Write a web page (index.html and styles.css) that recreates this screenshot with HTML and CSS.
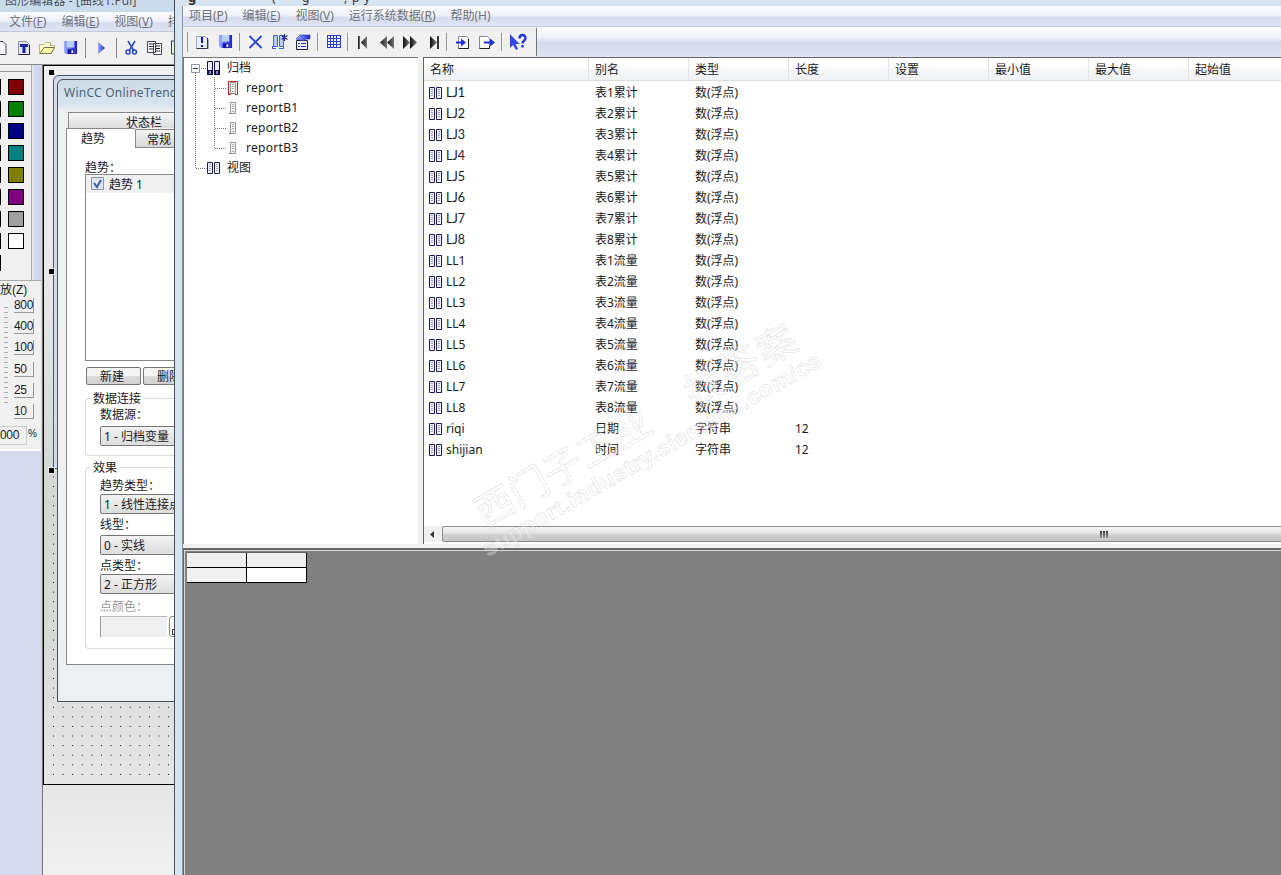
FILE: index.html
```html
<!DOCTYPE html>
<html lang="zh">
<head>
<meta charset="utf-8">
<title>用户归档</title>
<link rel="stylesheet" href="styles.css">
</head>
<body>
<svg width="0" height="0" class="defs">
  <symbol id="book" viewBox="0 0 13 12"><path d="M.5.5h5v11h-5zM7.500.5h5v11h-5z" fill="#f4f4ff" stroke="#1c1c50"/><path d="M2 2.500h2M2 4.500h2M2 6.500h2M2 8.500h2M9 2.500h2M9 4.500h2M9 6.500h2M9 8.500h2" stroke="#9c9cc8"/></symbol>
  <symbol id="doc" viewBox="0 0 10 14"><path d="M2.500 1.500h5v11h-5z" fill="#f4f4f4" stroke="#999"/><path d="M1 12.500h6" stroke="#888"/><path d="M4 3.500h2M4 5.500h2M4 7.500h2M4 10.500h2" stroke="#aaa"/></symbol>
  <linearGradient id="blue"><stop offset="0" stop-color="#9cb0ff"/><stop offset="1" stop-color="#1d20d0"/></linearGradient>
  <linearGradient id="grey"><stop offset="0" stop-color="#111"/><stop offset="1" stop-color="#777"/></linearGradient>
  <symbol id="save" viewBox="0 0 16 16"><path d="M1 1h14v14H3l-2-2z" fill="url(#blue)"/><path d="M4 1h8v7H4z" fill="#bcd0f5"/><path d="M5 10h7v5H5z" fill="#1414a0"/><path d="M9 11h2v3H9z" fill="#fff"/></symbol>
</svg>
<div class="desktop">
  <section class="editor">
    <div class="title ed-title">图形编辑器 - [曲线1.Pdl]</div>
    <div class="menu ed-menu"><span>文件(<u>F</u>)</span><span>编辑(<u>E</u>)</span><span>视图(<u>V</u>)</span><span>排列</span></div>
    <div class="ed-tools">
      <svg width="174" height="30" viewBox="0 34 174 30">
        <path d="M-4 41.500h7l3 3v10h-10" fill="#f4f4ff" stroke="#445"/>
        <path d="M18.500 41.500h8l3 3v10h-11z" fill="#dfe6fb" stroke="#8890b8"/><path d="M29.500 45v9.500h-11" fill="none" stroke="#223"/><path d="M20 44h8v3h-2.500v6h-3v-6H20z" fill="#1c24a8"/>
        <path d="M39.500 53.500v-9h4l2-2h5v3h4l-3 8z" fill="#fffbd0" stroke="#b9b48a"/><path d="M40 53.500l4-6h10.500l-3.500 6z" fill="#fff6a8" stroke="#777540"/>
        <use href="#save" x="63" y="40" width="15" height="15"/>
        <path d="M85.500 38v20M116.500 38v20" stroke="#888"/><path d="M98 42v12l7-6z" fill="url(#blue)"/>
        <path d="M128 41l6 10M135 41l-6 10" stroke="#2945c8" stroke-width="1.500"/><circle cx="128" cy="52" r="2" fill="none" stroke="#2945c8" stroke-width="1.500"/><circle cx="134.500" cy="52" r="2" fill="none" stroke="#2945c8" stroke-width="1.500"/>
        <path d="M147.500 41.500h8v11h-8zM153.500 43.500h8v11h-8z" fill="#fff" stroke="#445"/><path d="M149 44h4M149 46.500h4M149 49h4M155 46h5M155 48.500h5M155 51h5" stroke="#223"/><path d="M171.500 41v13h3M171 41h3" fill="none" stroke="#223a90"/>
      </svg>
    </div>
    <div class="ed-body">
      <aside class="side">
        <div class="palette">
          <div class="sliver"><i></i><i></i><i></i><i></i><i></i><i></i><i></i><i></i><i></i></div>
          <div class="colors"><b class="c1"></b><b class="c2"></b><b class="c3"></b><b class="c4"></b><b class="c5"></b><b class="c6"></b><b class="c7"></b><b class="c8"></b></div>
          <div class="grip"></div>
        </div>
        <div class="zoom">
          <div class="zoom-head">放(Z)</div>
          <div class="zoom-main"><div class="ticks"></div><div class="levels"><span>800</span><span>400</span><span>100</span><span>50</span><span>25</span><span>10</span></div></div>
          <div class="zoom-foot"><span>000</span><em>%</em></div>
        </div>
      </aside>
      <div class="canvas">
        <div class="sheet"><div class="dots"></div></div>
        <i class="handle h1"></i><i class="handle h2"></i><i class="handle h3"></i>
        <div class="halo"></div>
        <div class="dialog">
          <div class="dlg-title">WinCC OnlineTrendControl</div>
          <div class="tab-back">状态栏</div>
          <div class="tabs"><span class="tab on">趋势</span><span class="tab">常规</span></div>
          <div class="page">
            <label class="lb">趋势：</label>
            <div class="listbox"><div class="item"><svg width="13" height="13"><path d="M.5.5h12v12H.5z" fill="#dce6f4" stroke="#8a96a8"/><path d="M3 6l3 4 4-7" fill="none" stroke="#3d5c96" stroke-width="2"/></svg><span>趋势 1</span></div></div>
            <div class="btns"><span class="btn">新建</span><span class="btn">删除</span></div>
            <div class="group g1"><span class="cap">数据连接</span><label>数据源：</label><div class="combo">1 - 归档变量</div></div>
            <div class="group g2"><span class="cap">效果</span><label>趋势类型：</label><div class="combo">1 - 线性连接点</div><label class="l2">线型：</label><div class="combo">0 - 实线</div><label class="l3">点类型：</label><div class="combo">2 - 正方形</div><label class="l4">点颜色：</label><div class="color-row"><span></span><b></b></div></div>
          </div>
        </div>
      </div>
    </div>
  </section>

  <section class="archive">
    <div class="ar-title"><b>g</b><span>(</span><span>g</span><span>,</span><span>p</span><span>y</span></div>
    <div class="menu ar-menu"><span>项目(<u>P</u>)</span><span>编辑(<u>E</u>)</span><span>视图(<u>V</u>)</span><span>运行系统数据(<u>R</u>)</span><span>帮助(H)</span></div>
    <div class="ar-tools">
      <svg width="354" height="29" viewBox="183 27 354 29">
        <path d="M187.500 32v20M239.500 33v18M317.500 33v18M347.500 33v18M446.500 33v18M501.500 33v18" stroke="#999"/><path d="M536.500 28v28" stroke="#777"/>
        <path d="M196.500 36.500h9l3 3v9h-12z" fill="#e8edff" stroke="#a0a8c8"/><path d="M207.500 38v10.500h-11" fill="none" stroke="#334"/><path d="M202 37v6M202 45v2" stroke="#1414c0" stroke-width="2"/>
        <use href="#save" x="218" y="34" width="15" height="15"/>
        <path d="M249.500 36l12 12M261.500 36l-12 12" stroke="#2a3ed8" stroke-width="1.800"/>
        <path d="M273.500 35.500h4v11h-4zM279.500 35.500h4v11h-4z" fill="#b9c8ff" stroke="#4a60d8"/><path d="M272 48.500h4M279 48.500h5M272.500 46v3M283.500 46v3" stroke="#4a60d8"/><path d="M284.500 34v7M281.500 35.500l6 4M287.500 35.500l-6 4" stroke="#222a90" stroke-width="1.200"/>
        <path d="M296.500 40.500h11v9h-11z" fill="#eef" stroke="#224"/><path d="M298 43.500h2M301 43.500h5M298 46.500h2M301 46.500h5" stroke="#2a38b8"/><path d="M296 39l4-4h10v4h-4l-2 2z" fill="url(#blue)" stroke="#2038a0" stroke-width=".6"/>
        <path d="M327 35h14v13h-14z" fill="#2c3fc4"/><path d="M328 36h2v2h-2zm3 0h2v2h-2zm3 0h2v2h-2zm3 0h3v2h-3zM328 39h2v2h-2zm3 0h2v2h-2zm3 0h2v2h-2zm3 0h3v2h-3zM328 42h2v2h-2zm3 0h2v2h-2zm3 0h2v2h-2zm3 0h3v2h-3zM328 45h2v2h-2zm3 0h2v2h-2zm3 0h2v2h-2zm3 0h3v2h-3z" fill="#edf0ff"/>
        <g fill="url(#grey)"><path d="M358 36h2v13h-2z"/><path d="M367 36v13l-6-6.500z"/><path d="M387 36v13l-7-6.500z"/><path d="M394 36v13l-7-6.500z"/><path d="M403 36v13l7-6.500z"/><path d="M410 36v13l7-6.500z"/><path d="M430 36v13l7-6.500z"/><path d="M437 36h2v13h-2z" fill="#333"/></g>
        <path d="M458.500 36.500h8l2 2v10h-10z" fill="#fff" stroke="#889"/><path d="M468.500 39v9.500h-10" stroke="#222" fill="none"/><path d="M456 41.500h5v-3l5 4-5 4v-3h-5z" fill="#2030d8"/>
        <path d="M479.500 36.500h8l2 2v10h-10z" fill="#fff" stroke="#889"/><path d="M489.500 46v2.500h-10" stroke="#222" fill="none"/><path d="M484 41.500h6v-3l5 4-5 4v-3h-6z" fill="#2030d8"/>
        <path d="M510 34v14l3-3 3 5 2-1-2.500-5h4z" fill="#3348e0"/><path d="M519.500 38.500c0-4.500 6-4.500 6-.5 0 3-3 2.500-3 5.500M522.500 45v2.500" fill="none" stroke="#2233d0" stroke-width="2.400"/>
      </svg>
    </div>
    <div class="panes">
      <div class="tree">
        <svg class="wires" width="60" height="130" viewBox="184 58 60 130"><path d="M195.500 73v95.500h11M201 68.500h5M214.500 77v71.500M215 88.500h11M215 108.500h11M215 128.500h11M215 148.500h11" fill="none" stroke="#777" stroke-dasharray="1 1"/><path d="M191.500 64.500h8v8h-8z" fill="#fff" stroke="#8c94a8"/><path d="M193 68.500h5" stroke="#335"/></svg>
        <div class="node root"><svg width="13" height="15" viewBox="0 0 13 15"><path d="M.5.500h5v13h-5zM7.500.500h5v13h-5z" fill="#eef" stroke="#10104c"/><path d="M0 9h6v5H0zM7 9h6v5H7z" fill="#10104c"/><path d="M3 10v3M10 10v3" stroke="#fff"/></svg>归档</div>
        <div class="node leaf"><svg width="10" height="14" viewBox="0 0 10 14"><use href="#doc"/><path d="M.5 13.500V.500h9v13M0 13.500h3M7 13.500h3" fill="none" stroke="#c0281c"/></svg>report</div>
        <div class="node leaf"><svg width="10" height="14"><use href="#doc"/></svg>reportB1</div>
        <div class="node leaf"><svg width="10" height="14"><use href="#doc"/></svg>reportB2</div>
        <div class="node leaf"><svg width="10" height="14"><use href="#doc"/></svg>reportB3</div>
        <div class="node root"><svg width="13" height="12"><use href="#book"/></svg>视图</div>
      </div>
      <div class="list">
        <div class="row head"><span>名称</span><span>别名</span><span>类型</span><span>长度</span><span>设置</span><span>最小值</span><span>最大值</span><span>起始值</span></div>
        <div class="rows" id="rows"></div>
        <div class="scroll"><svg width="18" height="16"><path d="M10 5v7L6 8.500z" fill="#333"/></svg><div class="thumb"><i></i><i></i><i></i></div></div>
      </div>
    </div>
    <div class="data"><div class="cells"><i></i><i></i><i></i><i class="w"></i></div></div>
  </section>
  <svg class="mark" width="1281" height="875">
    <g transform="translate(485 528) rotate(-29.800)"><text class="m1" x="0" y="0" textLength="196">西门子工业</text><text class="m1" x="241" y="0" textLength="122">找答案</text></g>
    <g transform="translate(488 557) rotate(-29.800)"><text class="m2" textLength="386">support.industry.siemens.com/cs</text></g>
  </svg>
</div>
<script src="rows.js"></script>
</body>
</html>
```
FILE: styles.css
```css
* { box-sizing: border-box; }
body { margin: 0; overflow: hidden; font: 12px/16px "Noto Sans", "Noto Sans CJK SC", sans-serif; color: #1a1a1a; }
.defs { position: absolute; }
i, b, em { display: block; font-style: normal; }
.desktop { position: relative; width: 1281px; height: 875px; display: flex; overflow: hidden; }
.desktop span, .desktop label, .node { white-space: nowrap; }

/* graphics editor window */
.editor { width: 174px; height: 875px; overflow: hidden; display: flex; flex-direction: column; background: #f0f0f0; flex: none; }
.ed-title { display: flex; align-items: flex-end; height: 12px; line-height: 16px; padding: 0 0 3px 5px; background: #cadceb; color: #4a535c; white-space: nowrap; overflow: hidden; letter-spacing: .1px; }
.menu { display: flex; color: #6f7278; background: linear-gradient(#fafbfe 0%, #f0f2fa 45%, #d6dcef 60%, #dfe4f3 100%); }
.ed-menu { height: 20px; padding: 2px 0 0 9px; gap: 15px; border-bottom: 1px solid #c3c9da; }
.ed-tools { height: 32px; padding-top: 2px; }
.ed-tools svg { display: block; }
.ed-body { flex: 1; display: flex; border-top: 1px solid #888; min-height: 0; }
.side { width: 42px; background: #d4d9ee; border-right: 1px solid #d5d5d5; flex: none; }
.palette { height: 215px; width: 42px; display: flex; }
.sliver { width: 8px; background: #f0f0f0; padding-top: 14px; }
.sliver i { width: 1px; height: 16px; background: #000; margin-bottom: 6px; }
.colors { width: 24px; background: #f0f0f0; padding-top: 14px; border-right: 1px solid #aaa; }
.colors b { width: 16px; height: 16px; border: 1px solid #000; margin-bottom: 6px; }
.sliver, .colors { background: linear-gradient(#f0f0f0 0 6px, #999 6px 7px, #f0f0f0 7px); }
.colors .c1 { background: #800000; } .colors .c2 { background: #008000; } .colors .c3 { background: #000080; } .colors .c4 { background: #008080; }
.colors .c5 { background: #808000; } .colors .c6 { background: #800080; } .colors .c7 { background: #a0a0a0; } .colors .c8 { background: #fff; }
.grip { width: 9px; background: linear-gradient(90deg, #f0f0f0, #d0d6ee 30%); }
.zoom { height: 171px; background: #f0f0f0; border-top: 1px solid #aaa; border-bottom: 2px solid #fff; font-family: "Liberation Sans", "Noto Sans CJK SC", sans-serif; }
.zoom-head { height: 17px; line-height: 18px; }
.zoom-main { display: flex; height: 130px; }
.ticks { width: 4px; height: 100px; margin: 9px 6px 0 4px; background: repeating-linear-gradient(#aaa 0 1px, transparent 1px 5px); }
.levels span { display: block; width: 20px; height: 15px; line-height: 14px; margin-bottom: 6.200px; border-right: 1px solid #999; border-bottom: 1px solid #999; letter-spacing: -.3px; }
.zoom-foot { display: flex; line-height: 16px; margin-top: -2px; }
.zoom-foot span { width: 27px; height: 19px; border: 1px solid #ccc; border-left: 0; letter-spacing: -.3px; }
.zoom-foot em { font-size: 10px; margin-left: 1px; line-height: 15px; }
.canvas { position: relative; width: 132px; background: linear-gradient(#f0f0f0 0, #e8e9e8 200px, #d4d7d4 430px, #d8dad8 570px, #e4e4e4 690px, #e7e7e7 725px, #f0f0f0 100%); border-left: 1px solid #777; overflow: hidden; }
.sheet { height: 720px; border: 1px solid #000; border-width: 1px 0 1px 1px; display: flex; flex-direction: column; justify-content: flex-end; }
.dots { height: 308px; margin: 0 0 2px 9px; background: radial-gradient(circle at .5px .5px, #000 .6px, transparent .8px) 0 2.500px / 9.600px 9.600px; }
.handle { position: absolute; left: 6px; width: 5px; height: 5px; background: #000; outline: 1px solid #eee; z-index: 2; }
.h1 { top: 5px; } .h2 { top: 204px; } .h3 { top: 403px; }
.halo { position: absolute; left: 10px; top: 10px; width: 140px; height: 394px; border: 1px solid #46566e; border-radius: 6px 0 0 0; background: #d3dbe4; }
.dialog { position: absolute; left: 14px; top: 14px; width: 130px; height: 623px; border: 1px solid #46505c; border-radius: 6px 0 0 0; background: linear-gradient(#cddbe7 0, #d6e4ef 24px, #f0f0f0 32px, #edf0f2 100%); padding-left: 8px; }
.dlg-title { height: 32px; margin-left: -2px; padding-top: 5px; color: #4f6478; letter-spacing: .25px; white-space: nowrap; }
.tab-back { height: 16px; margin-left: 2px; border: 1px solid #888; border-bottom: 0; background: linear-gradient(#f6f6f6, #ddd); padding-left: 57px; line-height: 19px; }
.tabs { display: flex; height: 20px; }
.tab { width: 60px; padding-left: 11px; line-height: 20px; border: 1px solid #888; background: linear-gradient(#f4f4f4, #d8d8d8); margin-top: 1px; flex: none; }
.tab.on { width: 69px; padding-left: 14px; background: #fff; border-bottom: 0; line-height: 19px; margin-top: 0; border-right: 0; }
.page { height: 517px; border: 1px solid #888; border-top: 0; background: #fff; padding: 10px 0 0 18px; }
.page label { display: block; height: 16px; }
.page .lb { line-height: 19px; }
.listbox { height: 187px; border: 1px solid #888; }
.item { display: flex; gap: 5px; background: #f0f0f0; height: 18px; padding: 2px 0 0 5px; }
.btns { display: flex; gap: 2px; height: 30px; padding: 6px 0 0 1px; }
.btn { width: 55px; height: 18px; line-height: 17px; padding-left: 13px; border: 1px solid #777; border-radius: 2px; background: linear-gradient(#f4f4f4 50%, #ddd 50%, #d0d0d0); flex: none; }
.group { position: relative; border: 1px solid #ddd; border-right: 0; border-radius: 4px 0 0 4px; padding-left: 14px; }
.cap { position: absolute; top: -8px; left: 5px; background: #fff; padding: 0 2px; }
.g1 { margin-top: 7px; height: 58px; padding-top: 7px; }
.g2 { margin-top: 11px; height: 182px; padding-top: 10px; }
.combo { height: 20px; width: 100px; border: 1px solid #777; border-radius: 2px; background: linear-gradient(#f2f2f2, #ddd); line-height: 19px; padding-left: 3px; white-space: nowrap; margin-top: 4px; }
.g1 label { line-height: 17px; }
.g2 .combo { margin-top: 0; }
.page .l2 { height: 21px; line-height: 21px; }
.page .l3 { height: 19px; line-height: 21px; }
.page .l4 { height: 22px; line-height: 26px; color: #999; }
.color-row { display: flex; gap: 2px; }
.color-row span { width: 67px; height: 21px; background: #f0f0f0; border-left: 1px solid #999; border-top: 1px solid #bbb; flex: none; }
.color-row b { width: 20px; height: 21px; border: 1px solid #888; border-radius: 3px; flex: none; }
.color-row b::before { content: ""; display: block; width: 5px; height: 4px; border: 1px solid #333; margin: 12px 0 0 2px; }

/* archive window */
.archive { flex: 1; height: 875px; border-left: 1px solid #464e56; padding-left: 8px; background: linear-gradient(90deg, #d6e4f2 0 7px, #8b939c 7px 8px, #f0f0f0 8px); overflow: hidden; }
.ar-title { height: 6px; background: #d6e4f2; display: flex; align-items: flex-end; overflow: hidden; padding: 0 0 4px 6px; color: #333; line-height: 9px; margin-left: -1px; }
.ar-title b { width: 84px; font-size: 13px; }
.ar-title span { width: 30px; }
.ar-title span:nth-child(3) { width: 42px; }
.ar-title span:nth-child(4) { width: 8px; }
.ar-title span:nth-child(5) { width: 12px; }
.ar-menu { height: 21px; padding: 2px 0 0 6px; gap: 15px; border-bottom: 1px solid #c3c9da; }
.ar-tools { height: 30px; background: linear-gradient(90deg, #f0f0f0 354px, transparent 354px), linear-gradient(#fbfcfe 0%, #eff2fa 35%, #d4daee 52%, #dfe4f3 100%); }
.ar-tools svg { display: block; }
.panes { display: flex; gap: 5px; height: 487px; background: #f0f0f0; }
.tree { position: relative; width: 235px; background: #fff; border: 1px solid #777; border-width: 1px 0 0 1px; }
.wires { position: absolute; left: 0; top: 0; }
.node { display: flex; align-items: center; height: 20px; }
.root { padding-left: 23px; gap: 7px; }
.leaf { padding-left: 44px; gap: 8px; letter-spacing: .3px; }
.list { flex: 1; background: #fff; border: 1px solid #666; border-width: 1px 0 0 1px; display: flex; flex-direction: column; overflow: hidden; }
.row { display: grid; grid-template-columns: 165px repeat(7, 100px); height: 21px; line-height: 21px; margin-right: -10px; }
.row span { padding-left: 6px; display: flex; align-items: center; gap: 4px; }
.rows span:first-child { padding-left: 5px; }
.rows .lj { font-family: Lato, sans-serif; font-size: 12.500px; }
.head { height: 23px; border-bottom: 1px solid #dcdcdc; background: linear-gradient(#fff 40%, #f4f5f7 55%, #f0f1f3); }
.head span { border-right: 1px solid #e0e3e8; }
.rows { flex: 1; padding-top: 1px; }
.scroll { height: 16px; margin-bottom: 2px; display: flex; background: #f0f0f0; }
.thumb { flex: 1; margin-right: -47px; border: 1px solid #8e8e8e; border-radius: 2px; background: linear-gradient(#f4f4f4, #e4e4e4 45%, #cfcfcf 55%, #c4c4c4); display: flex; gap: 1px; padding: 4px 0 0 657px; }
.thumb i { width: 2px; height: 7px; background: linear-gradient(#333, #999); }
.data { height: 330px; margin-top: 4px; border: 1px solid #666; border-width: 2px 0 0 1px; background: #808080; box-shadow: inset 1px 1px #d8d8d8; padding: 2px 0 0 3px; }
.cells { display: grid; grid-template-columns: 60px 60px; grid-auto-rows: 15px; width: 120px; border-top: 1px solid #666; }
.cells i { background: #f0f0f0; border: 1px solid #000; border-width: 0 1px 1px 0; }
.cells .w { background: #fff; }
.mark { position: absolute; left: 0; top: 0; pointer-events: none; }
.mark text { fill: rgba(255,255,255,.3); stroke: rgba(205,205,205,.5); stroke-width: .8px; }
.m1 { font: 400 39px "Noto Sans CJK SC", sans-serif; }
.m2 { font: bold 23px "Liberation Sans", sans-serif; }
```
FILE: rows.js
```js
const items = [];
for (let n = 1; n <= 8; n++) items.push(['LJ' + n, '表' + n + '累计', '数(浮点)', '']);
for (let n = 1; n <= 8; n++) items.push(['LL' + n, '表' + n + '流量', '数(浮点)', '']);
items.push(['riqi', '日期', '字符串', '12'], ['shijian', '时间', '字符串', '12']);
document.getElementById('rows').innerHTML = items.map(r =>
  '<div class="row"><span class="' + (r[0].startsWith('LJ') ? 'lj' : '') + '"><svg width="13" height="12"><use href="#book"/></svg>' + r[0] + '</span>' +
  r.slice(1).map(c => '<span>' + c + '</span>').join('') + '</div>').join('');
```
